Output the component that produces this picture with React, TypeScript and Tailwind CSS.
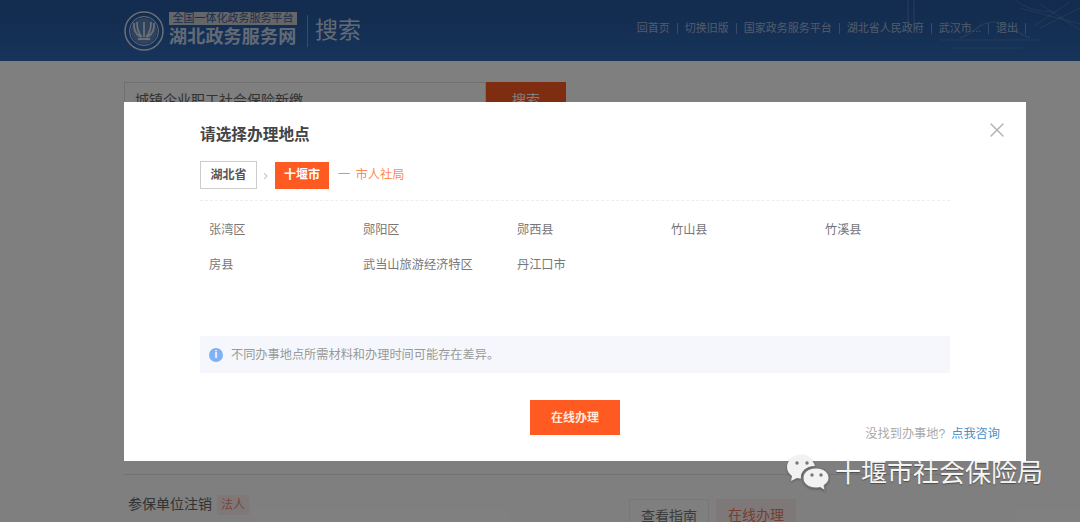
import React from 'react';
import { X } from 'lucide-react';

const cjk = 'font-["Liberation_Sans","Noto_Sans_CJK_SC",sans-serif]';

const navLinks = ['回首页', '切换旧版', '国家政务服务平台', '湖北省人民政府', '武汉市...', '退出'];

const districts = ['张湾区', '郧阳区', '郧西县', '竹山县', '竹溪县', '房县', '武当山旅游经济特区', '丹江口市'];

const Emblem = () => (
  <svg width="40" height="40" viewBox="0 0 40 40" fill="none" stroke="#ffffff" className="opacity-80">
    <circle cx="20" cy="20" r="19" strokeWidth="1.5" />
    <circle cx="20" cy="20" r="14.5" strokeWidth="1" />
    <circle cx="20" cy="20" r="13" fill="#ffffff" fillOpacity="0.3" stroke="none" />
    <path d="M10 12c-1 6 2 12 7 14M30 12c1 6-2 12-7 14M13 11c0 7 2 12 5 15M27 11c0 7-2 12-5 15M20 11v15M14 28h12" strokeWidth="1.8" />
  </svg>
);

const HeaderDecor = () => (
  <svg width="180" height="61" viewBox="0 0 180 61" fill="none" stroke="#ffffff" strokeOpacity="0.14" className="absolute top-0 right-0">
    <path d="M8 0v30M14 0v30M60 38c14-4 18-16 34-16s22 12 36 16" strokeWidth="1.500" />
    <path d="M40 40h100M52 48h70" strokeWidth="1" />
    <path d="M115 0c10 8 24 12 40 12M120 8l60 16M140 4l40 26M180 8l-40 20M170 2l-36 24" strokeWidth="1" />
  </svg>
);

const WechatIcon = () => (
  <svg width="42" height="36" viewBox="0 0 42 36" className="drop-shadow-[0_1px_1px_rgba(0,0,0,0.3)]">
    <path d="M15 0C7 0 0 5 0 12c0 4 2 7 5 9l-1 5 6-3c1.500.400 3 .500 4 .500C13 17 19 11 28 11 26 5 21 0 15 0z" fill="#f2f2f2" />
    <circle cx="10" cy="8" r="1.700" fill="#777777" />
    <circle cx="20" cy="8" r="1.700" fill="#777777" />
    <path d="M29 13c-7 0-13 4-13 10s6 10 13 10c1.500 0 3-.300 4-.600l5 3-1-5c3-2 5-4.500 5-7.400 0-6-6-10-13-10z" fill="#f2f2f2" stroke="#777777" strokeWidth="1" />
    <circle cx="25" cy="20" r="1.700" fill="#777777" />
    <circle cx="34" cy="20" r="1.700" fill="#777777" />
  </svg>
);

export default function App() {
  return (
    <div className={`relative h-[522px] w-[1080px] overflow-hidden bg-white ${cjk}`}>
      {/* page behind the dialog */}
      <header className="relative flex h-[61px] items-center justify-between bg-gradient-to-b from-[#24569c] to-[#3068b4] pl-[124px] pr-[47px]">
        <HeaderDecor />
        <div className="flex items-center">
          <Emblem />
          <div className="ml-[5px] flex w-[128px] flex-col">
            <span className="bg-[#c8cdd4] text-center text-[11px] leading-[13px] text-[#3a5f96]">全国一体化政务服务平台</span>
            <span className="text-[18px] leading-[24px] font-bold tracking-[0.2px] whitespace-nowrap text-[#c6d5ea]">湖北政务服务网</span>
          </div>
          <span className="mr-[7px] ml-[10px] h-[32px] w-px bg-[#6f96cc]" />
          <span className="text-[23px] leading-none text-[#c6d5ea]">搜索</span>
        </div>
        <nav className="relative mb-[5px] flex items-center text-[11px] text-[#a4b8d4]">
          {navLinks.map((link) => (
            <React.Fragment key={link}>
              <span className="whitespace-nowrap">{link}</span>
              <span className="mx-[7px] h-[11px] w-px bg-[#6f96cc]" />
            </React.Fragment>
          ))}
        </nav>
      </header>

      <main className="px-[124px] pt-[21px]">
        <div className="flex h-[40px] w-[442px]">
          <div className="flex-1 border border-[#e0e0e0] pl-[10px] text-[14px] leading-[34px] text-[#666666]">城镇企业职工社会保险新缴</div>
          <div className="w-[80px] bg-[#ff5a22] text-center text-[14px] leading-[36px] text-white">搜索</div>
        </div>
        <div className="mt-[352px] h-px bg-[#e4e4e4]" />
        <div className="mt-[19px] flex items-start pl-[4px]">
          <span className="text-[14px] leading-[20px] text-[#666666]">参保单位注销</span>
          <span className="mt-[1px] ml-[5px] bg-[#fdf3f1] px-[4px] text-[12px] leading-[20px] text-[#ee8a78]">法人</span>
          <span className="mt-[5px] ml-[380px] h-[32px] w-[80px] border border-[#eeeeee] text-center text-[14px] leading-[32px] text-[#777777]">查看指南</span>
          <span className="mt-[5px] ml-[7px] h-[32px] w-[80px] bg-[#fdf3f1] text-center text-[14px] leading-[32px] text-[#ee7a60]">在线办理</span>
        </div>
      </main>

      <div className="absolute inset-0 bg-black/50" />

      {/* dialog */}
      <div className="absolute top-[102px] left-[124px] h-[359px] w-[902px] bg-white px-[76px] pt-[23px]">
        <X className="absolute top-[16px] right-[17px] text-[#b5b5b5]" size={24} strokeWidth={1.5} />
        <h2 className="text-[15.7px] leading-[20px] font-bold text-[#444444]">请选择办理地点</h2>
        <div className="mt-[16px] flex h-[28px] items-center text-[12px]">
          <span className="h-[28px] w-[57px] border border-[#cccccc] text-center leading-[26px] font-bold text-[#555555]">湖北省</span>
          <span className="mx-[4px] w-[9px] text-center text-[15px] text-[#c4c4c4]">›</span>
          <span className="ml-[1px] h-[27px] w-[54px] bg-[#ff5a22] text-center leading-[27px] font-bold text-white">十堰市</span>
          <span className="ml-[9px] text-[12.2px] text-[#ff8a55]">一 <span className="ml-[2px]">市人社局</span></span>
        </div>
        <div className="mt-[11px] border-t border-dashed border-[#eeeeee]" />
        <div className="mt-[20px] grid w-[779px] grid-cols-5 gap-y-[17px] pl-[9px] text-[12.2px] leading-[18px] text-[#777777]">
          {districts.map((d) => (
            <span key={d}>{d}</span>
          ))}
        </div>
        <div className="mt-[62px] flex h-[37px] items-center bg-[#f5f7fc] pl-[9px] text-[12.2px] text-[#999999]">
          <span className="flex h-[14px] w-[14px] items-center justify-center rounded-full bg-[#7fb2f5] text-[10px] leading-none font-bold text-white">i</span>
          <span className="mt-[2px] ml-[8px]">不同办事地点所需材料和办理时间可能存在差异。</span>
        </div>
        <div className="mt-[27px] flex justify-center">
          <button className="h-[35px] w-[90px] bg-[#ff5a22] text-[12px] font-bold text-[#ffe9df]">在线办理</button>
        </div>
        <div className="absolute right-[26px] bottom-[18px] text-[12.2px] text-[#aaaaaa]">
          没找到办事地?<span className="ml-[6px] text-[#4a90c8]">点我咨询</span>
        </div>
      </div>

      {/* wechat watermark */}
      <div className="absolute top-[455px] left-[787px] flex items-center">
        <WechatIcon />
        <span className="ml-[6px] text-[26px] leading-[36px] whitespace-nowrap text-[#f5f5f5] [text-shadow:0_1px_1px_rgba(0,0,0,0.4)]">十堰市社会保险局</span>
      </div>
    </div>
  );
}
